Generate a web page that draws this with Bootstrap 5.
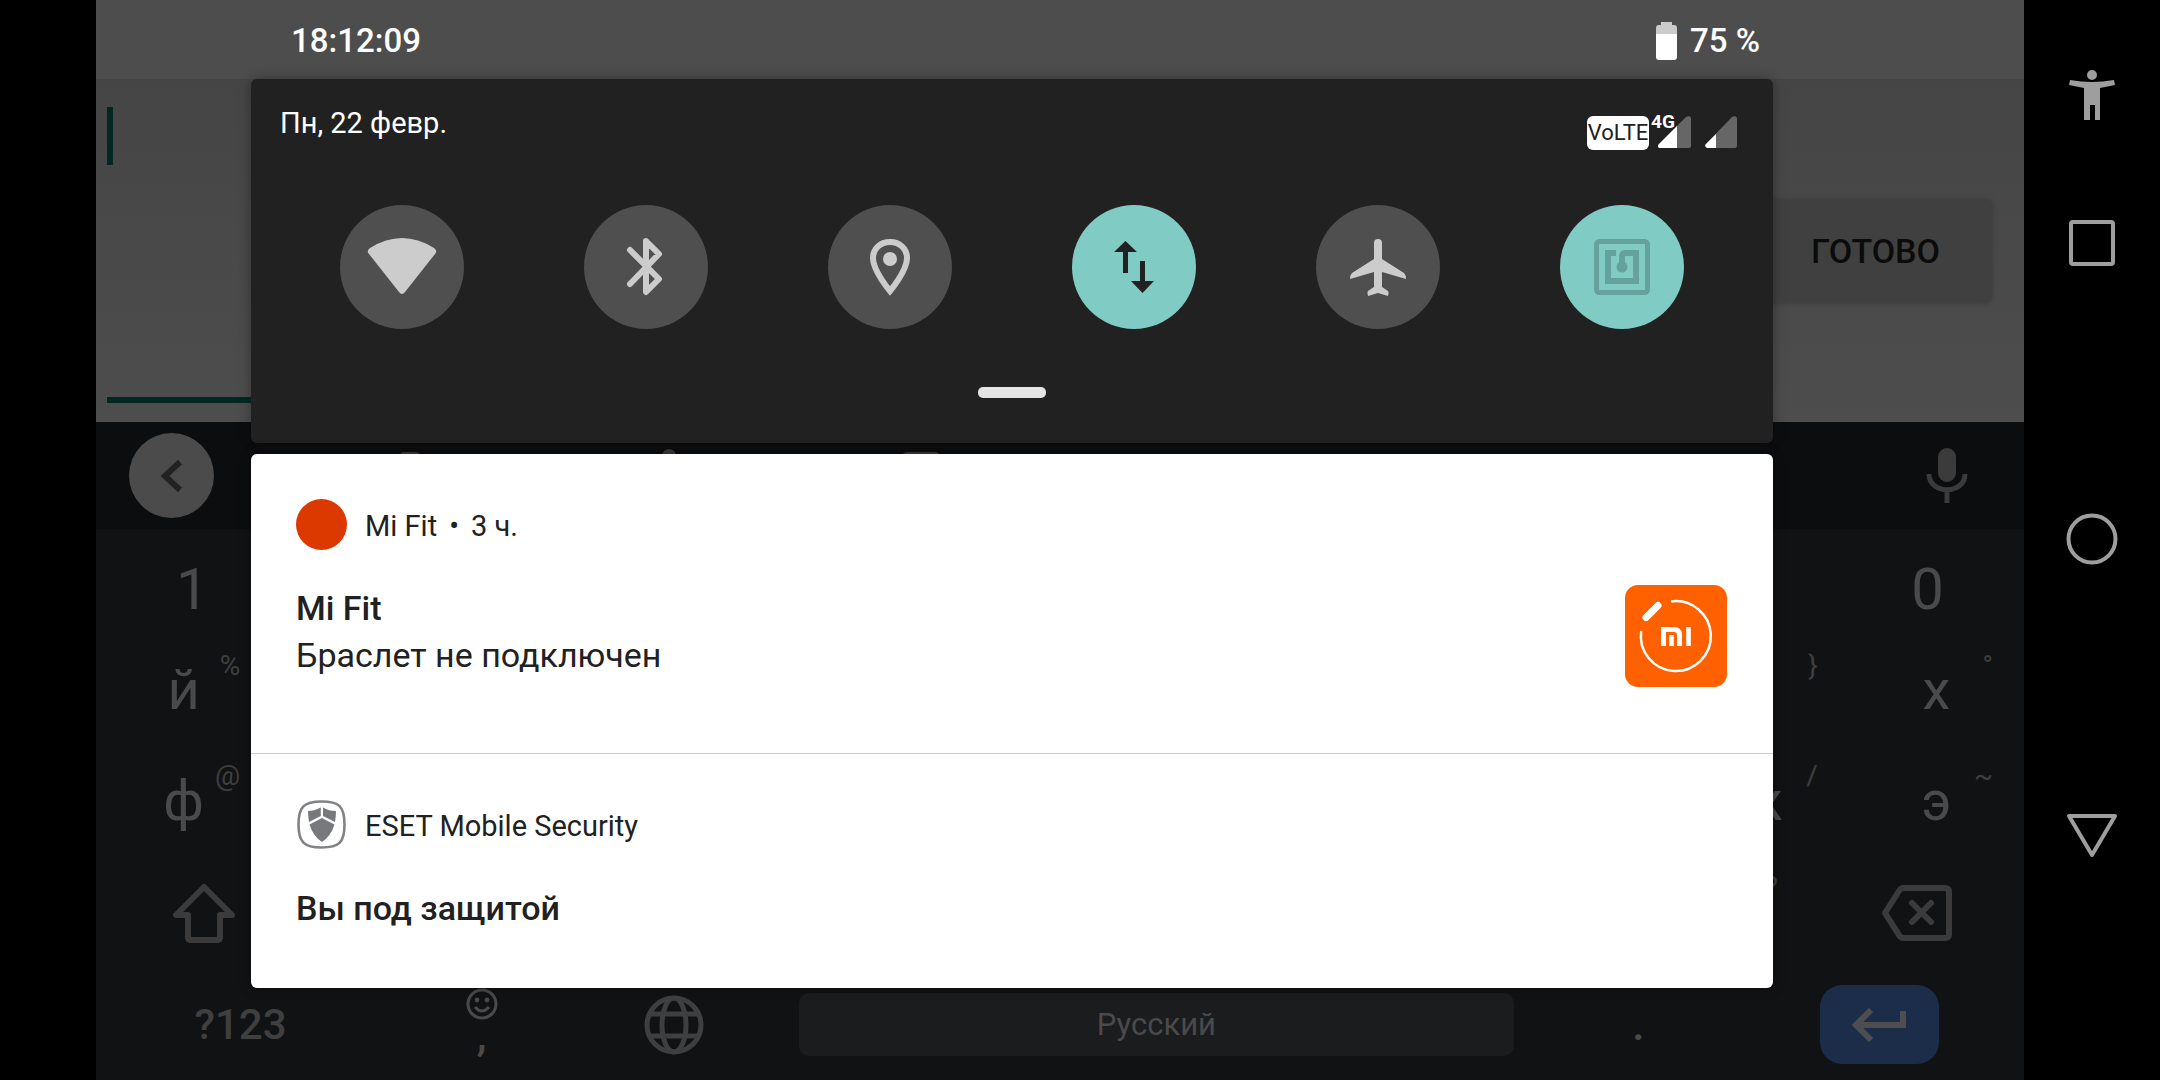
<!DOCTYPE html>
<html lang="ru">
<head>
<meta charset="utf-8">
<meta name="viewport" content="width=device-width, initial-scale=1">
<title>Панель уведомлений</title>
<link href="https://cdn.jsdelivr.net/npm/bootstrap@5.3.0/dist/css/bootstrap.min.css" rel="stylesheet">
<style>
  body { background: #000; font-family: Roboto, "Noto Sans", sans-serif; color: #fff; }
  button { border: 0; background: none; padding: 0; font-family: inherit; }
  svg { display: block; flex: none; }
  .cutout { width: 96px; }
  .sysnav { width: 136px; padding-top: 70px; }
  .sysnav button { color: #9e9e9e; }
  .nav-recent { margin-top: 100px; }
  .nav-home { margin-top: 247px; }
  .nav-back { margin-top: 248px; }

  /* dimmed application */
  .app-status { height: 79px; background: #4d4d4d; }
  .app-form { height: 343px; background: linear-gradient(#454545, #4d4d4d); padding: 28px 32px 19px 11px; }
  .entry { flex: 1; min-width: 0; background: transparent; border: 0; border-bottom: 6px solid #022823; resize: none; border-radius: 0; outline: 0; }
  .caret { width: 6px; height: 58px; background: #022823; left: 0; top: 0; }
  .done { height: 103px; margin-top: 92px; width: 356px; padding-right: 52px; background: #404040; color: #0b0b0b; font-size: 34px; font-weight: 500; line-height: 40px; border-radius: 6px; box-shadow: 0 1px 5px #3a3a3a; }

  /* keyboard */
  .kb { background: #111214; color: #4a4a4b; }
  .kb-tools { height: 107px; background: #0c0d0f; color: #3b3b3c; }
  .tool-back { width: 85px; height: 85px; margin: 0 72px 0 33px; background: #4b4b4b; color: #222; }
  .tool-cell { width: 254px; }
  .kb-row { flex: 1 1 0; min-height: 110px; }
  .kcell { color: inherit; display: flex; align-items: center; justify-content: center; position: relative; }
  .k10 { width: 10%; padding-top: 10px; font-size: 58px; }
  .k11 { width: 9.0909%; padding-bottom: 8px; font-size: 56px; }
  .khint { position: absolute; right: 31px; top: 11px; font-size: 28px; line-height: 32px; color: #3f3f40; }
  .kside { width: 215px; color: #3b3b3c; padding-bottom: 4px; }
  .kwide { width: 15%; }
  .kthin { width: 10%; }
  .sym { font-size: 42px; font-weight: 500; color: #3f3f40; }
  .punct { font-size: 44px; line-height: 30px; font-weight: 500; padding-bottom: 12px; }
  .space { height: 63px; margin: 0 28px; border-radius: 10px; background: #1b1c1e; color: #4a4a4b; font-size: 31px; }
  .enter { width: 119px; height: 79px; border-radius: 22px; background: #1c2d4a; color: #4e4e50; }

  /* notification shade */
  .shade { inset: 0; padding: 0 251px 0 155px; }
  .clock { height: 79px; padding: 2px 13px 0 40px; font-size: 33px; font-weight: 500; }
  .qs { background: #212121; border-radius: 6px; padding: 26px 29px 45px; margin-bottom: 11px; box-shadow: 0 0 12px rgba(0,0,0,.35); }
  .qs-top { height: 45px; margin-bottom: 55px; padding-right: 7px; font-size: 29px; line-height: 36px; }
  .volte { width: 62px; height: 34px; border-radius: 6px; background: #fff; color: #212121; font-size: 22px; line-height: 34px; }
  .signals { margin-top: 11px; }
  .sim { margin: 0 14px 0 8px; }
  .net { left: -6px; top: -4px; font-size: 19px; line-height: 19px; font-weight: 700; }
  .tile { width: 124px; height: 124px; background: #4f4f4f; color: #ccc; }
  .tile-on { background: #80cbc4; color: #212121; }
  .grip { width: 68px; height: 11px; border-radius: 5px; background: #e5e5e5; margin: 58px auto 0; display: block; }
  .notes { background: #fff; color: #212121; border-radius: 6px; box-shadow: 0 0 12px rgba(0,0,0,.35); }
  .note { padding: 45px 46px 66px 45px; }
  .note + .note { border-top: 1px solid #ccc; padding-bottom: 56px; }
  .note-head { font-size: 29px; line-height: 51px; gap: 18px; margin-bottom: 35px; }
  .note-meta { gap: 12px; padding-top: 2px; margin-bottom: -2px; }
  .note-text { font-size: 34px; line-height: 47px; }
  .note-title { font-size: 34px; line-height: 47px; font-weight: 500; margin: 0; }
  .dot { width: 51px; height: 51px; background: #dc3900; }
</style>
<script src="https://cdn.jsdelivr.net/npm/bootstrap@5.3.0/dist/js/bootstrap.bundle.min.js"></script>
</head>
<body>
<div class="d-flex min-vh-100">
  <div class="cutout flex-shrink-0"></div>

  <main class="flex-grow-1 position-relative d-flex flex-column overflow-hidden">
    <div class="app-status"></div>
    <section class="app-form d-flex align-items-stretch">
      <div class="position-relative d-flex flex-grow-1">
        <textarea class="entry" aria-label="Ввод"></textarea>
        <span class="caret position-absolute"></span>
      </div>
      <button class="done text-end">ГОТОВО</button>
    </section>

    <section class="kb flex-grow-1 d-flex flex-column" aria-label="Клавиатура">
      <div class="kb-tools d-flex align-items-center">
        <button class="tool-back rounded-circle d-flex align-items-center justify-content-center" aria-label="Назад">
          <svg width="40" height="40" viewBox="0 0 40 40" fill="none" stroke="currentColor" stroke-width="6"><path d="M28 6 13 20l15 14"/></svg>
        </button>
        <div class="tool-cell d-flex justify-content-center"><svg width="50" height="48" viewBox="0 0 50 48" fill="currentColor"><rect x="12" y="0" width="20" height="8" rx="4"/></svg></div>
        <div class="tool-cell d-flex justify-content-center"><svg width="50" height="54" viewBox="0 0 50 54" fill="currentColor"><circle cx="27" cy="7" r="7"/></svg></div>
        <div class="tool-cell d-flex justify-content-center"><svg width="50" height="48" viewBox="0 0 50 48" fill="currentColor"><rect x="6" y="0" width="38" height="12" rx="5"/></svg></div>
        <button class="kcell ms-auto me-5" aria-label="Голосовой ввод">
          <svg width="58" height="56" viewBox="0 0 58 56"><rect x="20" y="0" width="18" height="34" rx="9" fill="currentColor"/><path d="M11 26c0 21 36 21 36 0M29 42v13" fill="none" stroke="currentColor" stroke-width="5"/></svg>
        </button>
      </div>
      <div class="kb-row d-flex justify-content-between">
        <button class="kcell k10">1</button>
        <button class="kcell k10">0</button>
      </div>
      <div class="kb-row d-flex">
        <button class="kcell k11 me-auto">й<span class="khint">%</span></button>
        <button class="kcell k11" aria-label="скобка"><span class="khint">}</span></button>
        <button class="kcell k11">х<span class="khint">°</span></button>
      </div>
      <div class="kb-row d-flex">
        <button class="kcell k11 me-auto">ф<span class="khint">@</span></button>
        <button class="kcell k11">ж<span class="khint">/</span></button>
        <button class="kcell k11">э<span class="khint">~</span></button>
      </div>
      <div class="kb-row d-flex">
        <button class="kcell kside" aria-label="Регистр">
          <svg width="64" height="62" viewBox="0 0 64 62" fill="none" stroke="currentColor" stroke-width="6" stroke-linejoin="round"><path d="M32 5 4 33h12v22q0 3 3 3h26q3 0 3-3V33h12Z"/></svg>
        </button>
        <div class="kcell flex-grow-1"><span class="khint">?</span></div>
        <button class="kcell kside" aria-label="Удалить">
          <svg width="72" height="58" viewBox="0 0 72 58" fill="none" stroke="currentColor" stroke-width="6" stroke-linecap="round" stroke-linejoin="round"><path d="M22 4h42q4 0 4 4v42q0 4-4 4H22q-2 0-4-3L4 29 18 7q2-3 4-3ZM31 19l19 19M50 19 31 38"/></svg>
        </button>
      </div>
      <div class="kb-row d-flex">
        <button class="kcell kwide sym">?123</button>
        <button class="kcell kthin flex-column punct">
          <svg width="32" height="32" viewBox="0 0 32 32" fill="none" stroke="currentColor" stroke-width="3"><circle cx="16" cy="16" r="14"/><path d="M9 19q7 8 14 0"/><circle cx="11" cy="12" r="2.4" fill="currentColor" stroke="none"/><circle cx="21" cy="12" r="2.4" fill="currentColor" stroke="none"/></svg>
          <span>,</span>
        </button>
        <button class="kcell kthin" aria-label="Язык">
          <svg width="60" height="60" viewBox="0 0 60 60" fill="none" stroke="#3f3f40" stroke-width="5"><circle cx="30" cy="30" r="27"/><ellipse cx="30" cy="30" rx="12" ry="27"/><path d="M5 19h50M5 41h50"/></svg>
        </button>
        <div class="flex-grow-1 d-flex align-items-center"><button class="space flex-grow-1">Русский</button></div>
        <button class="kcell kthin punct pb-0">.</button>
        <div class="kcell kwide">
          <button class="enter d-flex align-items-center justify-content-center" aria-label="Ввод">
            <svg width="56" height="36" viewBox="0 0 56 36" fill="none" stroke="currentColor" stroke-width="6"><path d="M20 3 5 18l15 15M6 18h46V4"/></svg>
          </button>
        </div>
      </div>
    </section>

    <div class="shade position-absolute">
      <header class="clock d-flex align-items-center justify-content-between">
        <time>18:12:09</time>
        <span class="d-flex align-items-center">
          <svg width="34" height="38" viewBox="0 0 34 38"><path d="M5 0h11v3h2q3 0 3 3v7H0V6q0-3 3-3h2Z" fill="#ccc"/><path d="M0 12h21v23q0 3-3 3H3q-3 0-3-3Z" fill="#fff"/></svg>75 %
        </span>
      </header>

      <section class="qs">
        <div class="qs-top d-flex justify-content-between align-items-start">
          <span>Пн, 22 февр.</span>
          <span class="signals d-flex">
            <span class="volte text-center">VoLTE</span>
            <span class="sim position-relative">
              <svg width="34" height="32" viewBox="0 0 34 32"><path d="M2 32q-2-2 0-4L29 1q5-2 5 2v27q0 2-2 2Z" fill="#666"/><path d="M2 32q-2-2 0-4L20 10v22Z" fill="#fff"/></svg>
              <span class="net position-absolute">4G</span>
            </span>
            <svg width="32" height="32" viewBox="0 0 32 32"><path d="M2 32q-3-2-1-4L27 1q5-2 5 2v27q0 2-2 2Z" fill="#666"/><path d="M2 32q-3-2-1-4L11 18v14Z" fill="#fff"/></svg>
          </span>
        </div>
        <div class="row g-0 row-cols-6">
          <div class="col d-flex justify-content-center"><button class="tile rounded-circle d-flex align-items-center justify-content-center" aria-label="Wi-Fi">
            <svg width="70" height="58" viewBox="0 0 70 58" fill="currentColor"><path d="M2 16q-3-3 1-6 32-20 64 0 4 3 1 6L38 54q-3 4-6 0Z"/></svg></button></div>
          <div class="col d-flex justify-content-center"><button class="tile rounded-circle d-flex align-items-center justify-content-center" aria-label="Bluetooth">
            <svg width="42" height="58" viewBox="0 0 42 58" fill="none" stroke="currentColor" stroke-width="6" stroke-linecap="round" stroke-linejoin="round"><path d="M5 12l29 29-13 13V3l13 13L5 46"/></svg></button></div>
          <div class="col d-flex justify-content-center"><button class="tile rounded-circle d-flex align-items-center justify-content-center" aria-label="Геоданные">
            <svg width="40" height="58" viewBox="0 0 40 58"><path d="M20 4C10 4 3 11 3 20c0 13 17 33 17 33s17-20 17-33C37 11 30 4 20 4Z" fill="none" stroke="currentColor" stroke-width="6"/><circle cx="20" cy="21" r="7" fill="currentColor"/></svg></button></div>
          <div class="col d-flex justify-content-center"><button class="tile tile-on rounded-circle d-flex align-items-center justify-content-center" aria-label="Мобильные данные">
            <svg width="40" height="52" viewBox="0 0 40 52" fill="currentColor"><path d="M11.500 0 23 11h-9v21H9V11H0ZM26 20h5v20h9L28.500 52 17 40h9Z"/></svg></button></div>
          <div class="col d-flex justify-content-center"><button class="tile rounded-circle d-flex align-items-center justify-content-center" aria-label="Режим полета">
            <svg width="56" height="58" viewBox="0 0 56 58" fill="currentColor"><path d="M24 5q0-4 4-4t4 4v16l22 14q2 2 2 6l-24-7v15l6 4q1 1 0 5l-10-3-10 3q-1-4 0-5l6-4V34L0 41q0-4 2-6l22-14Z"/></svg></button></div>
          <div class="col d-flex justify-content-center"><button class="tile tile-on rounded-circle d-flex align-items-center justify-content-center" aria-label="NFC">
            <svg width="56" height="56" viewBox="0 0 56 56" fill="none" stroke="#66a29d"><rect x="2.500" y="2.500" width="51" height="51" rx="3" stroke-width="5"/><path d="M22 14h-8v28h28V14H31q-3 0-3 4v12" stroke-width="6"/><circle cx="28" cy="28" r="5.500" fill="#66a29d" stroke="none"/></svg></button></div>
        </div>
        <button class="grip" aria-label="Развернуть"></button>
      </section>

      <section class="notes">
        <article class="note">
          <div class="note-head d-flex align-items-center"><span class="dot rounded-circle"></span><span class="note-meta d-flex"><span>Mi Fit</span><span>•</span><span>3 ч.</span></span></div>
          <div class="d-flex justify-content-between align-items-start">
            <div class="note-text"><h2 class="note-title">Mi Fit</h2>Браслет не подключен</div>
            <svg width="102" height="102" viewBox="0 0 102 102"><rect width="102" height="102" rx="13" fill="#ff6000"/><g fill="none" stroke="#fff"><path d="M46 16.400A35 35 0 1 1 16.200 46" stroke-width="2.500"/><path d="M21 32.500 33 20.500" stroke-width="7" stroke-linecap="round"/><path d="M38.500 61V44.500H49q5.500 0 5.500 5.500v11" stroke-width="5"/><path d="M46.500 50v11M63.500 42v19" stroke-width="4.600"/></g></svg>
          </div>
        </article>
        <article class="note">
          <div class="note-head d-flex align-items-center">
            <svg width="51" height="51" viewBox="0 0 51 51"><path d="M25.500 2.500C43 2.500 48.500 7 48.500 25.500S43 48.500 25.500 48.500 2.500 43 2.500 25.500 8 2.500 25.500 2.500Z" fill="none" stroke="#808285" stroke-width="2.600"/><path d="M24.800 8.500v8.500L13 23q-1-6-1-11 6 0 12.800-3.500ZM27 8.500v8.500L39 23q1-6 1-11-7 0-13-3.500ZM26 19l12.500 6.500Q35 37 26 43 17 37 13.500 25.500Z" fill="#77797c"/></svg>
            <span class="note-meta d-flex">ESET Mobile Security</span></div>
          <h2 class="note-title">Вы под защитой</h2>
        </article>
      </section>
    </div>
  </main>

  <nav class="sysnav flex-shrink-0 d-flex flex-column align-items-center" aria-label="Навигация">
    <button aria-label="Специальные возможности"><svg width="46" height="50" viewBox="0 0 46 50" fill="currentColor"><circle cx="23" cy="5" r="5"/><path d="M1 10q22 4 44 0l1 5-15 3v32h-5V35h-5v15h-6V18L0 15Z"/></svg></button>
    <button class="nav-recent" aria-label="Обзор"><svg width="46" height="46" viewBox="0 0 46 46" fill="none" stroke="currentColor" stroke-width="4"><rect x="2" y="2" width="42" height="42" rx="2"/></svg></button>
    <button class="nav-home" aria-label="Домой"><svg width="52" height="52" viewBox="0 0 52 52" fill="none" stroke="currentColor" stroke-width="4"><circle cx="26" cy="26" r="23.500"/></svg></button>
    <button class="nav-back" aria-label="Назад"><svg width="52" height="46" viewBox="0 0 52 46" fill="none" stroke="currentColor" stroke-width="4" stroke-linejoin="round"><path d="M3 3h46L26 42Z"/></svg></button>
  </nav>
</div>
</body>
</html>
